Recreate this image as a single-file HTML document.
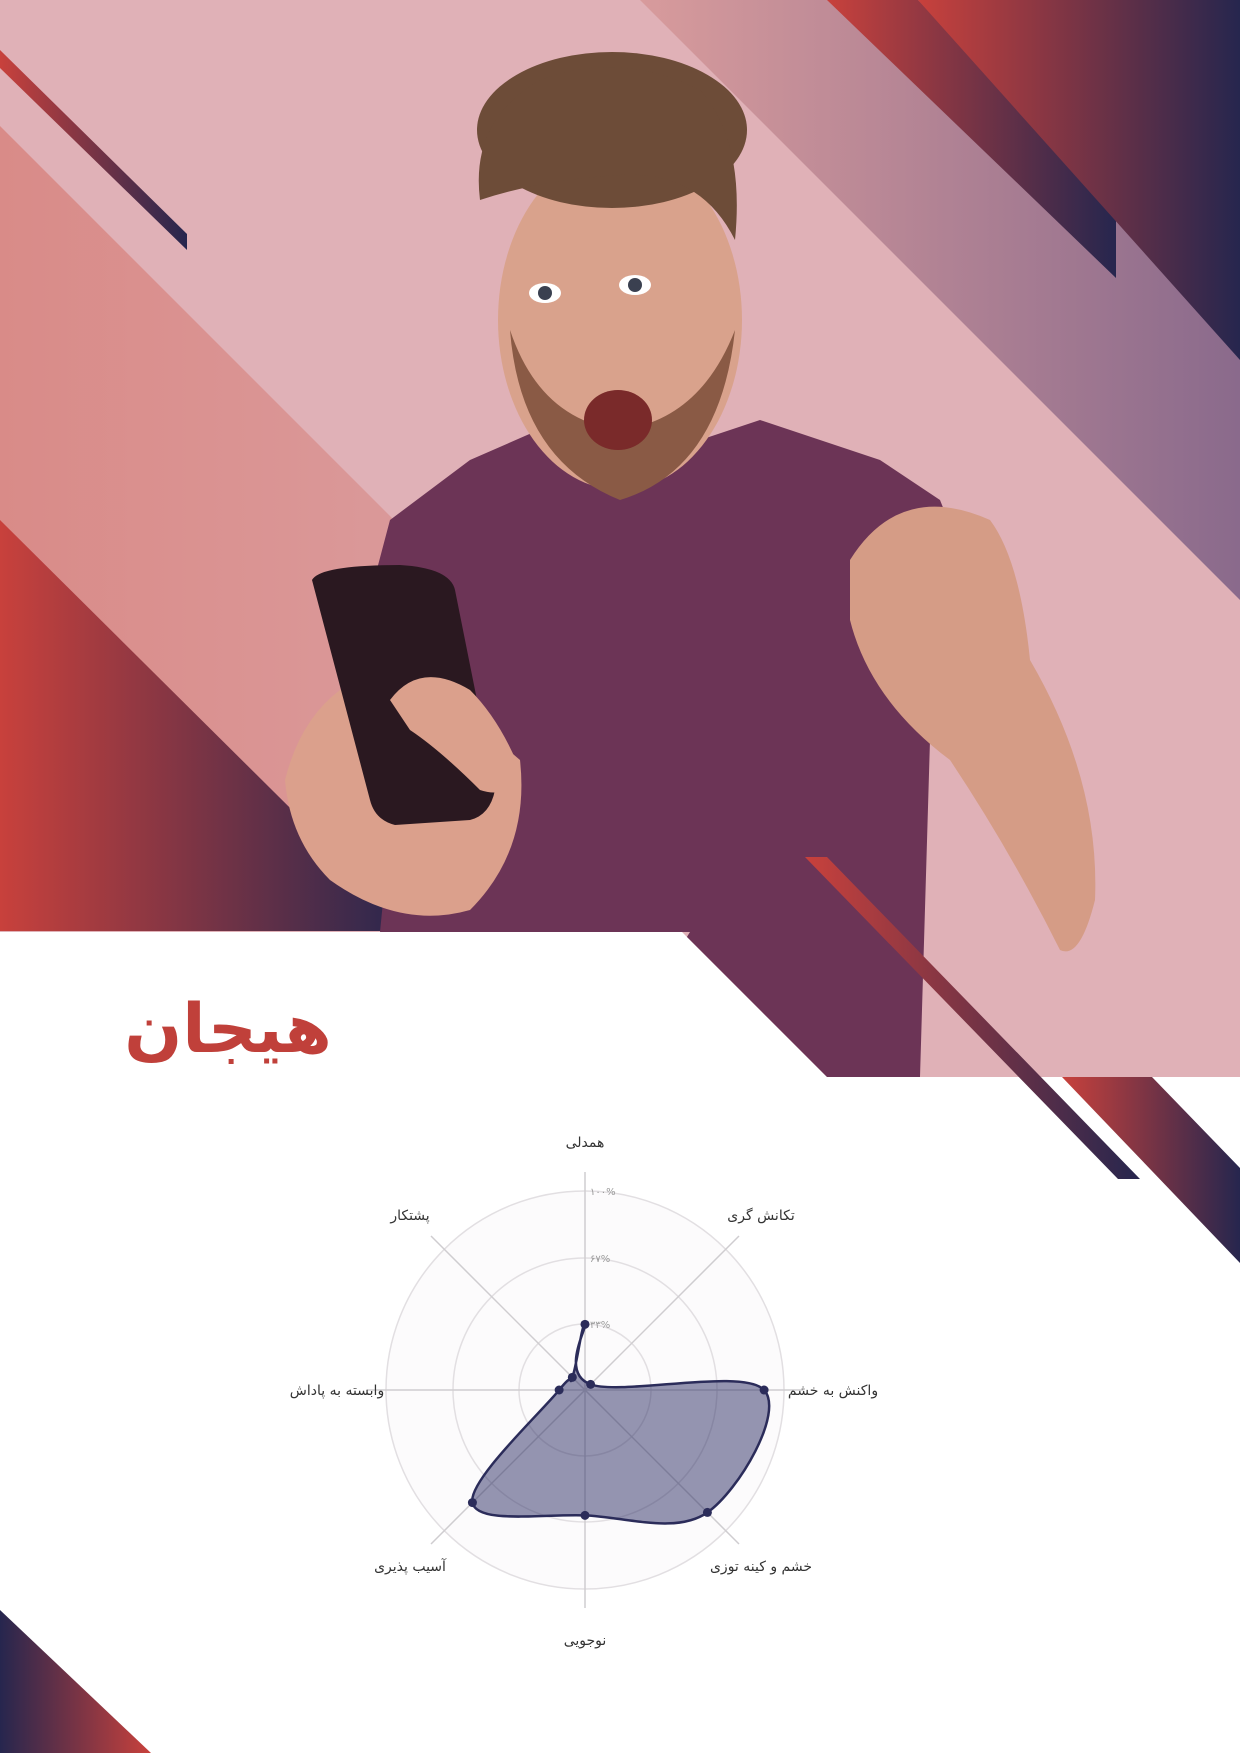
<!DOCTYPE html>
<html><head><meta charset="utf-8"><style>
html,body{margin:0;padding:0;background:#fff}
body{width:1240px;height:1753px;position:relative;overflow:hidden;font-family:"Liberation Sans","Noto Sans CJK SC",sans-serif}
svg{position:absolute;left:0;top:0}
.t{font-family:"DejaVu Sans","Noto Sans CJK SC",sans-serif}
</style></head><body>
<svg width="1240" height="1753" viewBox="0 0 1240 1753">
<defs>
<linearGradient id="rn" x1="0" y1="0" x2="1" y2="0"><stop offset="0" stop-color="#c8413c"/><stop offset="1" stop-color="#26264e"/></linearGradient>
<linearGradient id="nr" x1="0" y1="0" x2="1" y2="0"><stop offset="0" stop-color="#26264e"/><stop offset="1" stop-color="#c8413c"/></linearGradient>
<linearGradient id="sal" x1="0" y1="0" x2="1" y2="0"><stop offset="0" stop-color="#d98b88"/><stop offset="1" stop-color="#dca7ab"/></linearGradient>
<linearGradient id="mv" x1="0" y1="0" x2="1" y2="0"><stop offset="0" stop-color="#d89b9c"/><stop offset="1" stop-color="#8a6a8c"/></linearGradient>
<clipPath id="ph"><polygon points="0,0 1240,0 1240,1077 827,1077 682,932 0,932"/></clipPath>
</defs>
<g clip-path="url(#ph)">
<rect width="1240" height="1077" fill="#e0b1b7"/>
<polygon points="0,126 805,931 0,931" fill="url(#sal)"/>
<polygon points="0,520 414,931 0,931" fill="url(#rn)"/>
<polygon points="0,50 187,234 187,250 0,68" fill="url(#rn)"/>
<polygon points="640,0 1240,0 1240,600" fill="url(#mv)"/>
<polygon points="827,0 918,0 1116,198 1116,278" fill="url(#rn)"/>
<polygon points="918,0 1240,0 1240,360" fill="url(#rn)"/>
<g>
<polygon points="600,1077 690,932 380,932 395,780 345,690 390,520 470,460 550,425 620,460 700,440 760,420 880,460 940,500 1020,700 1030,770 930,740 920,1077" fill="#6c3456"/>
<path d="M850,560 Q900,480 990,520 Q1020,560 1030,660 Q1100,780 1095,900 Q1080,960 1060,950 Q1010,850 950,760 Q870,700 850,620 Z" fill="#d59c86"/>
<ellipse cx="620" cy="320" rx="122" ry="170" fill="#d9a28c"/>
<path d="M510,330 Q520,460 620,500 Q720,470 735,330 Q700,420 620,430 Q540,420 510,330Z" fill="#8a5a45"/>
<ellipse cx="618" cy="420" rx="34" ry="30" fill="#7a2a2a"/>
<ellipse cx="612" cy="130" rx="135" ry="78" fill="#6d4c38"/>
<path d="M480,200 Q470,120 540,80 Q620,50 700,90 Q745,140 735,240 Q700,170 620,175 Q540,180 480,200Z" fill="#6d4c38"/>
<ellipse cx="545" cy="293" rx="16" ry="10" fill="#fff"/><circle cx="545" cy="293" r="7" fill="#3a4050"/>
<ellipse cx="635" cy="285" rx="16" ry="10" fill="#fff"/><circle cx="635" cy="285" r="7" fill="#3a4050"/>
<path d="M285,780 Q300,720 340,690 L400,660 Q450,700 520,760 Q530,850 470,910 Q400,930 330,880 Q290,840 285,780Z" fill="#dba08c"/>
<path d="M312,580 Q320,565 400,565 Q450,568 455,590 L495,790 Q490,815 470,820 L395,825 Q375,820 370,800 Z" fill="#2a1820"/>
<path d="M390,700 Q420,660 470,690 Q500,720 520,770 Q510,800 480,790 Q440,750 410,730Z" fill="#dba08c"/>
</g>
</g>
<polygon points="805,857 827,857 1140,1179 1118,1179" fill="url(#rn)"/>
<polygon points="1062,1077 1152,1077 1240,1168 1240,1263" fill="url(#rn)"/>
<polygon points="0,1610 151,1753 0,1753" fill="url(#nr)"/>
<circle cx="585" cy="1390" r="199" fill="#fcfbfc" stroke="#e2dfe2" stroke-width="1.5"/>
<circle cx="585" cy="1390" r="132" fill="none" stroke="#e2dfe2" stroke-width="1.5"/>
<circle cx="585" cy="1390" r="66" fill="none" stroke="#e2dfe2" stroke-width="1.5"/>
<g stroke="#cfcdd0" stroke-width="1.5">
<line x1="585" y1="1172" x2="585" y2="1608"/>
<line x1="367" y1="1390" x2="803" y2="1390"/>
<line x1="431" y1="1236" x2="739" y2="1544"/>
<line x1="739" y1="1236" x2="431" y2="1544"/>
</g>
<path id="shape" d="" fill="rgba(44,45,100,0.5)" stroke="#2b2c5a" stroke-width="2.5"/>
<g id="dots" fill="#2b2c5a"></g>
<g font-size="10" fill="#999" class="t">
<text x="590" y="1195">۱۰۰%</text><text x="590" y="1262">۶۷%</text><text x="590" y="1328">۳۳%</text>
</g>
<g font-size="14" fill="#333" text-anchor="middle" class="t">
<text x="585" y="1147">همدلی</text>
<text x="761" y="1220">تکانش گری</text>
<text x="833" y="1395">واکنش به خشم</text>
<text x="761" y="1571">خشم و کینه توزی</text>
<text x="585" y="1645">نوجویی</text>
<text x="410" y="1571">آسیب پذیری</text>
<text x="337" y="1395">وابسته به پاداش</text>
<text x="410" y="1220">پشتکار</text>
</g>
<text x="228" y="1052" font-size="68" font-weight="bold" fill="#c0403a" text-anchor="middle" class="t">هیجان</text>
</svg>
<script>
var v=[0.33,0.04,0.9,0.87,0.63,0.8,0.13,0.09],R=199,cx=585,cy=1390,p=[];
for(var i=0;i<8;i++){var a=i*Math.PI/4;p.push([cx+Math.sin(a)*R*v[i],cy-Math.cos(a)*R*v[i]]);}
var d="M"+p[0][0]+","+p[0][1],t=0.35;
for(var i=0;i<8;i++){var p0=p[(i+7)%8],p1=p[i],p2=p[(i+1)%8],p3=p[(i+2)%8];
var c1=[p1[0]+(p2[0]-p0[0])*t/2,p1[1]+(p2[1]-p0[1])*t/2];
var c2=[p2[0]-(p3[0]-p1[0])*t/2,p2[1]-(p3[1]-p1[1])*t/2];
d+="C"+c1+" "+c2+" "+p2;}
document.getElementById("shape").setAttribute("d",d+"Z");
var g=document.getElementById("dots"),s="";
p.forEach(function(q){s+='<circle cx="'+q[0]+'" cy="'+q[1]+'" r="4.5"/>';});
g.innerHTML=s;
</script>
</body></html>
